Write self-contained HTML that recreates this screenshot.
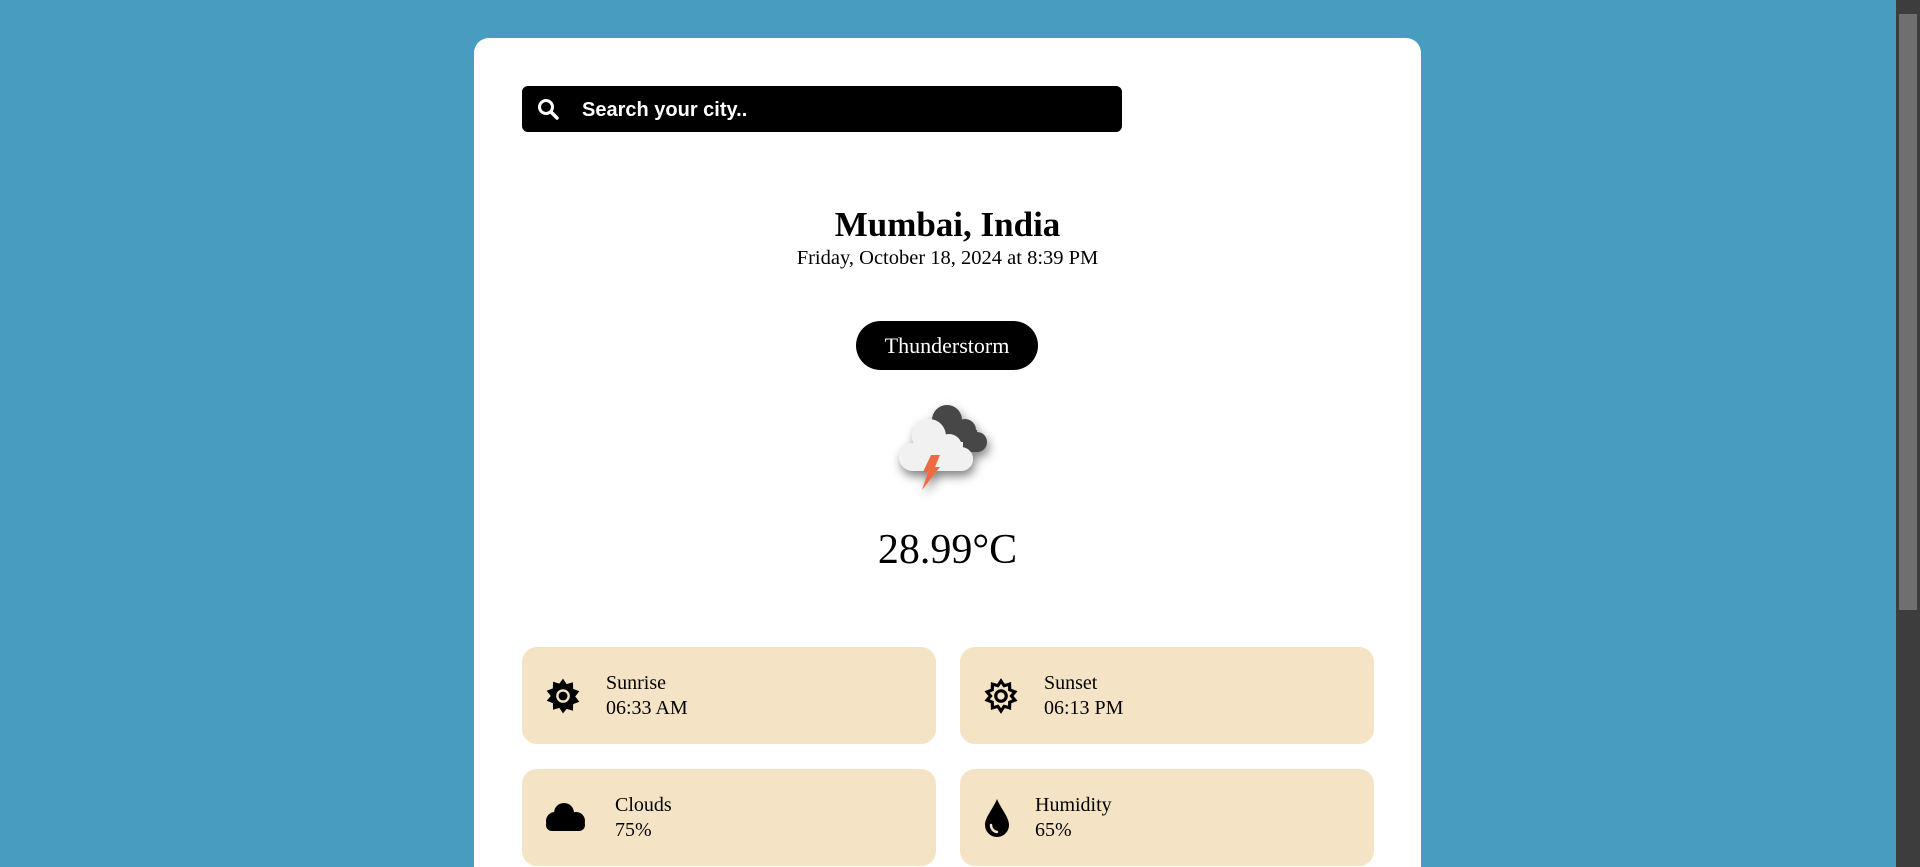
<!DOCTYPE html>
<html><head><meta charset="utf-8"><style>
*{margin:0;padding:0;box-sizing:border-box}
html,body{width:1920px;height:867px;overflow:hidden;background:#489cc0;font-family:"Liberation Serif",serif}
.card{position:absolute;left:474px;top:38px;width:947px;height:829px;background:#fff;border-radius:15px 15px 0 0}
.search{position:absolute;left:522px;top:86px;width:600px;height:46px;background:#000;border-radius:6px;color:#fff;font:bold 20px "Liberation Sans",sans-serif}
.search span{position:absolute;left:60px;top:13px}
.search svg{position:absolute;left:15px;top:12px}
.c{position:absolute;left:474px;width:947px;text-align:center}
.pill{position:absolute;left:856px;top:321px;width:182px;height:49px;border-radius:25px;background:#000;color:#fff;font-size:22px;text-align:center;line-height:49px}
.box{position:absolute;width:414px;height:97px;background:#f5e3c5;border-radius:15px;font-size:20px;line-height:25px}
.box .t{position:absolute;top:24px}
.box svg{position:absolute;left:22px}
.sb{position:absolute;right:0;top:0;width:24px;height:867px;background:#3d3d3d}
.th{position:absolute;right:3px;top:14px;width:18px;height:596px;background:#6f6f6f}
</style></head><body>
<div class="card"></div>
<div class="search"><svg width="22" height="22" viewBox="0 0 22 22"><circle cx="9" cy="9" r="6.5" fill="none" stroke="#fff" stroke-width="3"/><line x1="14" y1="14" x2="20" y2="20" stroke="#fff" stroke-width="3.5" stroke-linecap="round"/></svg><span>Search your city..</span></div>
<div class="c" style="top:205px;font-size:35px;font-weight:bold">Mumbai, India</div>
<div class="c" style="top:247px;font-size:20.5px">Friday, October 18, 2024 at 8:39 PM</div>
<div class="pill">Thunderstorm</div>
<svg style="position:absolute;left:871px;top:392px" width="140" height="110" viewBox="0 0 140 110">
<defs><filter id="f" x="-30%" y="-30%" width="160%" height="160%"><feDropShadow dx="2" dy="5" stdDeviation="5" flood-opacity="0.5"/></filter></defs>
<g filter="url(#f)">
<g fill="#474747"><circle cx="76" cy="28" r="15"/><circle cx="94" cy="38" r="11"/><circle cx="106" cy="50" r="10"/><rect x="70" y="38" width="36" height="22"/></g>
<g fill="#f1f1f1"><circle cx="58" cy="44" r="17"/><circle cx="78" cy="55" r="13"/><circle cx="42" cy="65" r="14"/><rect x="30" y="55" width="72" height="24" rx="12"/><rect x="42" y="50" width="50" height="29"/></g>
<path d="M60 63 L69 63 L64 75 L69 75 L51 98 L57 80 L52 80 Z" fill="#ed6a42"/>
</g></svg>
<div class="c" style="top:526px;font-size:42px">28.99°C</div>
<div class="box" style="left:522px;top:647px"><svg style="top:30px" width="38" height="38" viewBox="0 0 24 24"><path fill="#000" d="M12 1l2.3 3.5 4-1.2.1 4.2 3.9 1.5-2.6 3.3 2.6 3.3-3.9 1.5-.1 4.2-4-1.2L12 23l-2.3-3.5-4 1.2-.1-4.2-3.9-1.5L4.3 12 1.7 8.7l3.9-1.5.1-4.2 4 1.2z"/><circle cx="12" cy="12" r="4.3" fill="#f5e3c5"/><circle cx="12" cy="12" r="2.8" fill="#000"/></svg><div class="t" style="left:84px">Sunrise<br>06:33 AM</div></div>
<div class="box" style="left:960px;top:647px"><svg style="top:30px" width="38" height="38" viewBox="0 0 24 24"><path fill="none" stroke="#000" stroke-width="2" d="M12 2.5l2 3 3.4-1 .1 3.6 3.3 1.3-2.2 2.6 2.2 2.6-3.3 1.3-.1 3.6-3.4-1-2 3-2-3-3.4 1-.1-3.6-3.3-1.3L5.4 12 3.2 9.4l3.3-1.3.1-3.6 3.4 1z"/><circle cx="12" cy="12" r="3.3" fill="none" stroke="#000" stroke-width="2"/></svg><div class="t" style="left:84px">Sunset<br>06:13 PM</div></div>
<div class="box" style="left:522px;top:769px"><svg style="top:30px" width="44" height="38" viewBox="0 0 44 38"><g fill="#000"><circle cx="20" cy="14" r="10"/><circle cx="11" cy="22" r="9"/><circle cx="32" cy="22" r="9"/><rect x="2" y="20" width="39" height="12" rx="6"/></g></svg><div class="t" style="left:93px">Clouds<br>75%</div></div>
<div class="box" style="left:960px;top:769px"><svg style="top:28px" width="30" height="42" viewBox="0 0 30 42"><path d="M15 2 C11 12 3 20 3 28 A12 12 0 0 0 27 28 C27 20 19 12 15 2Z" fill="#000"/><path d="M9 28 A7 7 0 0 0 15 35" fill="none" stroke="#f5e3c5" stroke-width="2.5" stroke-linecap="round"/></svg><div class="t" style="left:75px">Humidity<br>65%</div></div>
<div class="sb"><div class="th"></div></div>
</body></html>
